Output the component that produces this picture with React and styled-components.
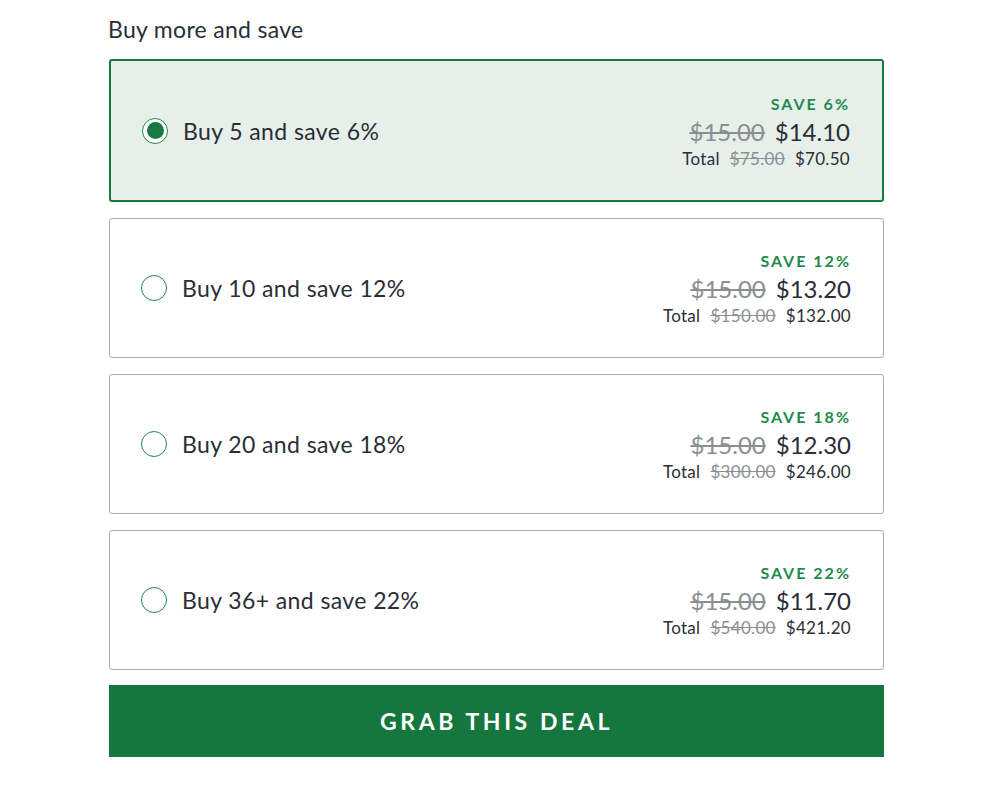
import React, { useState } from "react";
import styled, { createGlobalStyle } from "styled-components";

const Global = createGlobalStyle`
  html, body { margin: 0; padding: 0; background: #fff; }
  body { font-family: Lato, "Open Sans", sans-serif; color: #2a2e35; }
`;

const Page = styled.div`
  width: 775px;
  margin-left: 109px;
  padding-top: 14px;
`;

const Heading = styled.h2`
  margin: 0 0 15px -1px;
  font-size: 23px;
  line-height: 30px;
  font-weight: 400;
  letter-spacing: 0.3px;
  color: #2a2e35;
`;

const List = styled.div`
  display: flex;
  flex-direction: column;
  gap: 16px;
`;

const Card = styled.label`
  box-sizing: border-box;
  display: flex;
  align-items: center;
  justify-content: space-between;
  height: ${(p) => (p.$active ? "143px" : "140px")};
  padding: 0 32px 0 31px;
  border: ${(p) => (p.$active ? "2px solid #177a40" : "1px solid #a9abae")};
  border-radius: 3px;
  background: ${(p) => (p.$active ? "#e6efea" : "#fff")};
  cursor: pointer;
`;

const Left = styled.div`
  display: flex;
  align-items: center;
  gap: 15px;
`;

const Radio = styled.span`
  box-sizing: border-box;
  width: 26px;
  height: 26px;
  border-radius: 50%;
  border: 1.5px solid #1f8a4c;
  background: #fff;
  display: flex;
  align-items: center;
  justify-content: center;
  &::after {
    content: "";
    width: 17px;
    height: 17px;
    border-radius: 50%;
    background: #177a40;
    display: ${(p) => (p.$checked ? "block" : "none")};
  }
`;

const Label = styled.span`
  font-size: 23px;
  line-height: 30px;
  letter-spacing: 0.4px;
  color: #2a2e35;
`;

const Right = styled.div`
  display: flex;
  flex-direction: column;
  align-items: flex-end;
`;

const Save = styled.div`
  font-size: 16px;
  line-height: 26px;
  font-weight: 700;
  letter-spacing: 2px;
  color: #1f8a4c;
`;

const PriceRow = styled.div`
  display: flex;
  gap: 10px;
  font-size: 24px;
  line-height: 30px;
  color: #2a2e35;
`;

const Old = styled.s`
  color: #8b8e93;
`;

const TotalRow = styled.div`
  display: flex;
  gap: 10px;
  font-size: 17px;
  line-height: 24px;
  letter-spacing: 0.3px;
  color: #2a2e35;
`;

const Button = styled.button`
  margin-top: 15px;
  width: 100%;
  height: 72px;
  border: none;
  border-radius: 0;
  background: #15773e;
  color: #fff;
  font-family: Lato, "Open Sans", sans-serif;
  font-size: 23px;
  font-weight: 700;
  letter-spacing: 3.6px;
  cursor: pointer;
`;

const deals = [
  { qty: "5", pct: 6, price: "$14.10", oldTotal: "$75.00", total: "$70.50" },
  { qty: "10", pct: 12, price: "$13.20", oldTotal: "$150.00", total: "$132.00" },
  { qty: "20", pct: 18, price: "$12.30", oldTotal: "$300.00", total: "$246.00" },
  { qty: "36+", pct: 22, price: "$11.70", oldTotal: "$540.00", total: "$421.20" },
];

export default function App() {
  const [sel, setSel] = useState(0);
  return (
    <Page>
      <Global />
      <Heading>Buy more and save</Heading>
      <List>
        {deals.map((d, i) => (
          <Card key={d.qty} $active={sel === i} onClick={() => setSel(i)}>
            <Left>
              <Radio $checked={sel === i} />
              <Label>
                Buy {d.qty} and save {d.pct}%
              </Label>
            </Left>
            <Right>
              <Save>SAVE {d.pct}%</Save>
              <PriceRow>
                <Old>$15.00</Old>
                <span>{d.price}</span>
              </PriceRow>
              <TotalRow>
                <span>Total</span>
                <Old>{d.oldTotal}</Old>
                <span>{d.total}</span>
              </TotalRow>
            </Right>
          </Card>
        ))}
      </List>
      <Button>GRAB THIS DEAL</Button>
    </Page>
  );
}
